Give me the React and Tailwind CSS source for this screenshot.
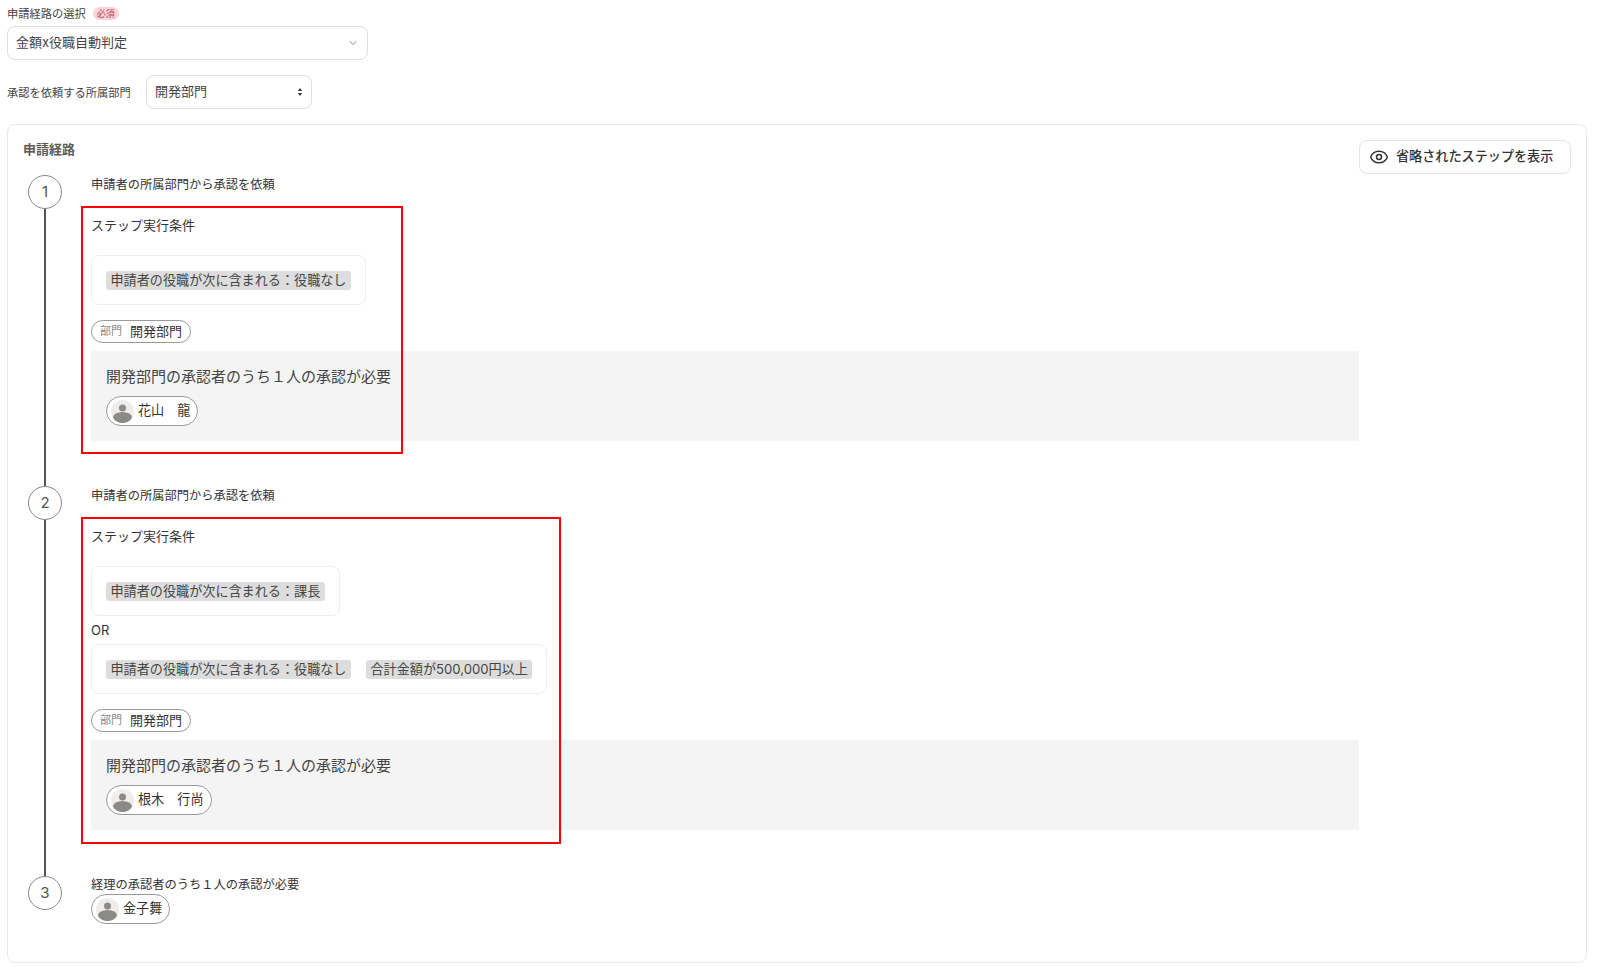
import { ChevronDown, Eye } from 'lucide-react'

const FONT = 'font-["Inter","Noto_Sans_CJK_JP",sans-serif]'

function Avatar() {
  return (
    <span className="w-[23px] h-[23px] rounded-full bg-[#eeedeb] overflow-hidden shrink-0">
      <svg width="23" height="23" viewBox="0 0 23 23" fill="#8c8a87">
        <circle cx="11.5" cy="8" r="3.500" />
        <ellipse cx="11.5" cy="17.500" rx="9.500" ry="5.500" />
      </svg>
    </span>
  )
}

function UserPill({ name }) {
  return (
    <div className="inline-flex items-center h-[30px] pl-[4px] pr-[7px] gap-[4px] rounded-full border border-[#999] bg-white text-[13.125px] text-[#333] whitespace-pre">
      <Avatar />
      {name}
    </div>
  )
}

function Condition({ tags }) {
  return (
    <div className="inline-flex gap-[15px] h-[50px] items-center px-[14px] rounded-lg border border-[#eeeeee] bg-white w-fit">
      {tags.map((tag) => (
        <span key={tag} className="h-[19px] leading-[19px] px-[4.5px] rounded-[3px] bg-[#dddddd] text-[13.125px] text-[#444]">{tag}</span>
      ))}
    </div>
  )
}

function StepBody({ conditions, boxWidth, boxHeight, user }) {
  return (
    <div className="relative">
      <div className="absolute left-[-10px] top-[-9px] border-2 border-[#ff0000] pointer-events-none" style={{ width: boxWidth, height: boxHeight }} />
      <p className="text-[13px] leading-[20px] text-[#333] mt-[1px]">ステップ実行条件</p>
      <div className="flex flex-col mt-[20px]">
        {conditions.map((tags, i) => (
          <div key={i} className="flex flex-col">
            {i > 0 && <p className="text-[13px] leading-[28px] h-[28px] text-[#333]">OR</p>}
            <Condition tags={tags} />
          </div>
        ))}
      </div>
      <div className="inline-flex items-center h-[23px] mt-[15px] px-[8px] gap-[8px] rounded-full border border-[#999] text-[13px] text-[#333] align-top">
        <span className="text-[11px] text-[#888]">部門</span>
        開発部門
      </div>
      <div className="mt-[8px] h-[90px] bg-[#f5f4f5] px-[15px] pt-[15px]">
        <p className="text-[15px] leading-[22px] text-[#444]">開発部門の承認者のうち１人の承認が必要</p>
        <div className="mt-[8px]">
          <UserPill name={user} />
        </div>
      </div>
    </div>
  )
}

function StepCircle({ n, line }) {
  return (
    <div className="flex flex-col items-center w-[34px] mr-[29px] shrink-0">
      <div className="w-[34px] h-[34px] rounded-full border border-[#888] bg-white flex items-center justify-center text-[15px] text-[#555] shrink-0">{n}</div>
      {line && <div className="w-[2px] flex-1 bg-[#555]" />}
    </div>
  )
}

export default function App() {
  return (
    <div className={`${FONT} w-[1600px] h-[968px] bg-white px-[7px] overflow-hidden text-[#333]`}>
      <div className="flex items-center gap-[7px] h-[26px] pt-[2px]">
        <span className="text-[11.25px] text-[#444]">申請経路の選択</span>
        <span className="h-[13px] leading-[13px] px-[4px] mb-[2px] rounded-full bg-[#fbd5da] text-[9px] text-[#b8485a]">必須</span>
      </div>
      <div className="flex items-center justify-between w-[361px] h-[34px] px-[8px] rounded-lg border border-[#dddddd] bg-white text-[13px] text-[#444]">
        金額x役職自動判定
        <ChevronDown size={12} color="#888" />
      </div>

      <div className="flex items-center mt-[15px]">
        <span className="w-[139px] text-[11.25px] text-[#444] pt-[2px]">承認を依頼する所属部門</span>
        <div className="flex items-center justify-between w-[166px] h-[34px] px-[8px] rounded-lg border border-[#dddddd] bg-white text-[13px] text-[#444]">
          開発部門
          <svg width="6" height="10" viewBox="0 0 6 10" fill="#333">
            <path d="M3 1 5.2 4H.8zM3 9 .8 6h4.400z" />
          </svg>
        </div>
      </div>

      <div className="flex mt-[15px] w-[1580px] h-[839px] pl-[15px] pr-[15px] rounded-lg border border-[#e8e8e8]">
        <div className="w-[1338px]">
          <h2 className="text-[13px] font-bold leading-[20px] text-[#5f5a52] mt-[14px]">申請経路</h2>

          <div className="flex mt-[16px] ml-[5px]">
            <StepCircle n="1" line />
            <div className="flex-1 pb-[45px]">
              <p className="text-[12.25px] leading-[18px] text-[#333] mt-[1px] mb-[21px]">申請者の所属部門から承認を依頼</p>
              <StepBody conditions={[['申請者の役職が次に含まれる：役職なし']]} boxWidth={322} boxHeight={248} user="花山　龍" />
            </div>
          </div>

          <div className="flex ml-[5px]">
            <StepCircle n="2" line />
            <div className="flex-1 pb-[46px]">
              <p className="text-[12.25px] leading-[18px] text-[#333] mt-[1px] mb-[21px]">申請者の所属部門から承認を依頼</p>
              <StepBody conditions={[['申請者の役職が次に含まれる：課長'], ['申請者の役職が次に含まれる：役職なし', '合計金額が500,000円以上']]} boxWidth={480} boxHeight={327} user="根木　行尚" />
            </div>
          </div>

          <div className="flex ml-[5px]">
            <StepCircle n="3" />
            <div className="flex-1">
              <p className="text-[12.25px] leading-[18px] text-[#333]">経理の承認者のうち１人の承認が必要</p>
              <UserPill name="金子舞" />
            </div>
          </div>
        </div>

        <button className="flex items-center gap-[7px] h-[34px] w-[212px] mt-[15px] pl-[9px] rounded-lg border border-[#e4e4e4] bg-white text-[13.125px] font-medium text-[#333] shrink-0">
          <Eye size={20} strokeWidth={1.8} />
          省略されたステップを表示
        </button>
      </div>
    </div>
  )
}
